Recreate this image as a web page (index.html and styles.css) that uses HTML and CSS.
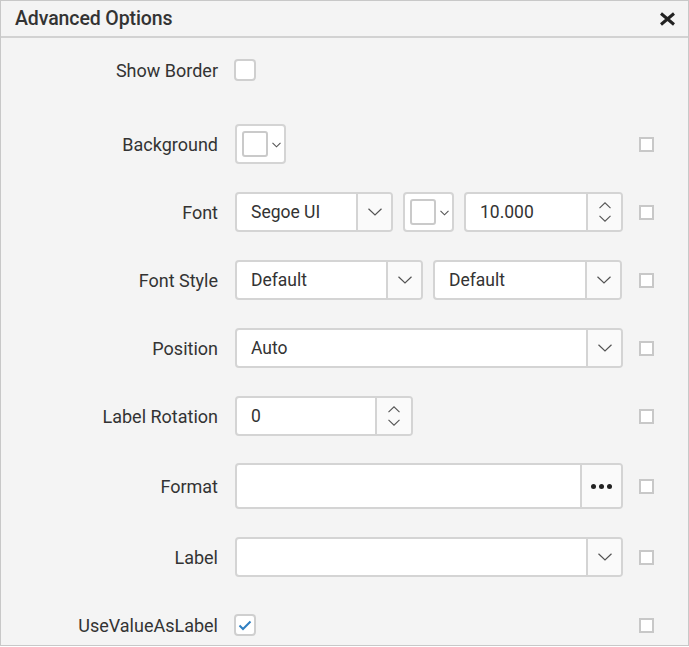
FILE: index.html
```html
<!DOCTYPE html>
<html>
<head>
<meta charset="utf-8">
<link rel="stylesheet" href="styles.css">
</head>
<body>
<div class="dialog">
  <div class="header">
    <span class="title">Advanced Options</span>
    <svg class="close" width="17" height="14" viewBox="0 0 17 14"><path d="M2 1.5 L15 12.5 M15 1.5 L2 12.5" stroke="#222" stroke-width="3" fill="none"/></svg>
  </div>
  <div class="body">
    <div class="row first">
      <div class="label">Show Border</div>
      <div class="controls"><span class="cb"></span></div>
      <div class="side"></div>
    </div>
    <div class="row">
      <div class="label">Background</div>
      <div class="controls">
        <div class="color"><span class="swatch"></span><svg class="mini" width="9" height="6" viewBox="0 0 9 6"><path d="M0.5 0.8 L4.5 4.8 L8.5 0.8" stroke="#555" stroke-width="1.1" fill="none"/></svg></div>
      </div>
      <div class="side"><span class="scb"></span></div>
    </div>
    <div class="row">
      <div class="label">Font</div>
      <div class="controls">
        <div class="field w158"><span class="val">Segoe UI</span><span class="btn"><svg width="14" height="8" viewBox="0 0 14 8"><path d="M0.5 0.8 L7 7 L13.5 0.8" stroke="#555" stroke-width="1.2" fill="none"/></svg></span></div>
        <div class="color"><span class="swatch"></span><svg class="mini" width="9" height="6" viewBox="0 0 9 6"><path d="M0.5 0.8 L4.5 4.8 L8.5 0.8" stroke="#555" stroke-width="1.1" fill="none"/></svg></div>
        <div class="field w159"><span class="val">10.000</span><span class="btn spin"><svg width="12" height="7" viewBox="0 0 12 7"><path d="M0.5 6.2 L6 0.8 L11.5 6.2" stroke="#555" stroke-width="1.1" fill="none"/></svg><svg width="12" height="7" viewBox="0 0 12 7"><path d="M0.5 0.8 L6 6.2 L11.5 0.8" stroke="#555" stroke-width="1.1" fill="none"/></svg></span></div>
      </div>
      <div class="side"><span class="scb"></span></div>
    </div>
    <div class="row">
      <div class="label">Font Style</div>
      <div class="controls">
        <div class="field w188"><span class="val">Default</span><span class="btn"><svg width="14" height="8" viewBox="0 0 14 8"><path d="M0.5 0.8 L7 7 L13.5 0.8" stroke="#555" stroke-width="1.2" fill="none"/></svg></span></div>
        <div class="field w189"><span class="val">Default</span><span class="btn"><svg width="14" height="8" viewBox="0 0 14 8"><path d="M0.5 0.8 L7 7 L13.5 0.8" stroke="#555" stroke-width="1.2" fill="none"/></svg></span></div>
      </div>
      <div class="side"><span class="scb"></span></div>
    </div>
    <div class="row">
      <div class="label">Position</div>
      <div class="controls">
        <div class="field full"><span class="val">Auto</span><span class="btn"><svg width="14" height="8" viewBox="0 0 14 8"><path d="M0.5 0.8 L7 7 L13.5 0.8" stroke="#555" stroke-width="1.2" fill="none"/></svg></span></div>
      </div>
      <div class="side"><span class="scb"></span></div>
    </div>
    <div class="row">
      <div class="label">Label Rotation</div>
      <div class="controls">
        <div class="field w178"><span class="val">0</span><span class="btn spin b36"><svg width="12" height="7" viewBox="0 0 12 7"><path d="M0.5 6.2 L6 0.8 L11.5 6.2" stroke="#555" stroke-width="1.1" fill="none"/></svg><svg width="12" height="7" viewBox="0 0 12 7"><path d="M0.5 0.8 L6 6.2 L11.5 0.8" stroke="#555" stroke-width="1.1" fill="none"/></svg></span></div>
      </div>
      <div class="side"><span class="scb"></span></div>
    </div>
    <div class="row tall">
      <div class="label">Format</div>
      <div class="controls">
        <div class="field full tallf"><span class="val"></span><span class="btn b41"><span class="dots"><i></i><i></i><i></i></span></span></div>
      </div>
      <div class="side"><span class="scb"></span></div>
    </div>
    <div class="row">
      <div class="label">Label</div>
      <div class="controls">
        <div class="field full"><span class="val"></span><span class="btn"><svg width="14" height="8" viewBox="0 0 14 8"><path d="M0.5 0.8 L7 7 L13.5 0.8" stroke="#555" stroke-width="1.2" fill="none"/></svg></span></div>
      </div>
      <div class="side"><span class="scb"></span></div>
    </div>
    <div class="row">
      <div class="label">UseValueAsLabel</div>
      <div class="controls"><span class="cb"><svg width="14" height="11" viewBox="0 0 14 11"><path d="M1.5 5.5 L5 9 L12.5 1.5" stroke="#2f7fc1" stroke-width="2" fill="none"/></svg></span></div>
      <div class="side"><span class="scb"></span></div>
    </div>
  </div>
</div>
</body>
</html>
```

FILE: styles.css
```css
* { box-sizing: border-box; }
html, body { margin: 0; padding: 0; background: #fff; }
body { font-family: Roboto, "Liberation Sans", Arial, sans-serif; color: #333; }
.dialog {
  width: 689px;
  height: 646px;
  border: 1px solid #c8c8c8;
  background: #f4f4f4;
}
.header {
  height: 37px;
  border-bottom: 2px solid #d2d2d2;
  display: flex;
  align-items: center;
  justify-content: space-between;
  padding: 0 12px 0 14px;
}
.title { font-size: 19.5px; font-weight: 500; color: #333; letter-spacing: -0.1px; }
.close { display: block; margin-top: 0; }
.body { padding-top: 12px; display: flex; flex-direction: column; gap: 28px; }
.row { display: flex; align-items: center; height: 40px; }
.row.first { margin-bottom: 6px; }
.row.tall { height: 46px; margin-top: -1px; }
.label {
  width: 217px;
  text-align: right;
  font-size: 18px;
  color: #333;
}
.controls { margin-left: 17px; width: 388px; display: flex; gap: 10px; align-items: center; }
.side { margin-left: 16px; width: 15px; height: 15px; }
.scb { display: block; width: 15px; height: 15px; border: 2px solid #c8c8c8; background: #fff; }
.cb {
  width: 22px; height: 22px;
  margin-left: -1px;
  border: 2px solid #cfcfcf;
  border-radius: 4px;
  background: #fff;
  display: flex; align-items: center; justify-content: center;
}
.color {
  width: 51px; height: 40px;
  background: #fff;
  border: 2px solid #d4d4d4;
  border-radius: 4px;
  display: flex; align-items: center;
  padding-left: 5px;
}
.swatch { width: 26px; height: 26px; border: 2px solid #cacaca; border-radius: 3px; background: #fff; }
.mini { margin-left: 4px; margin-top: 1px; }
.field {
  height: 40px;
  background: #fff;
  border: 2px solid #d4d4d4;
  border-radius: 4px;
  display: flex;
  overflow: hidden;
}
.w158 { width: 158px; }
.w159 { width: 159px; }
.w188 { width: 188px; }
.w189 { width: 189px; }
.w178 { width: 178px; }
.full { width: 388px; }
.tallf { height: 46px; }
.val { flex: 1; padding-left: 14px; font-size: 17.5px; line-height: 36px; color: #333; }
.tallf .val { line-height: 42px; }
.btn {
  width: 35px;
  border-left: 2px solid #d4d4d4;
  background: #fafafa;
  display: flex; align-items: center; justify-content: center;
}
.btn.b36 { width: 36px; }
.btn.b41 { width: 41px; }
.spin { flex-direction: column; gap: 6px; }
.dots { display: flex; gap: 3px; }
.dots i { display: block; width: 5px; height: 5px; border-radius: 50%; background: #222; }
```
